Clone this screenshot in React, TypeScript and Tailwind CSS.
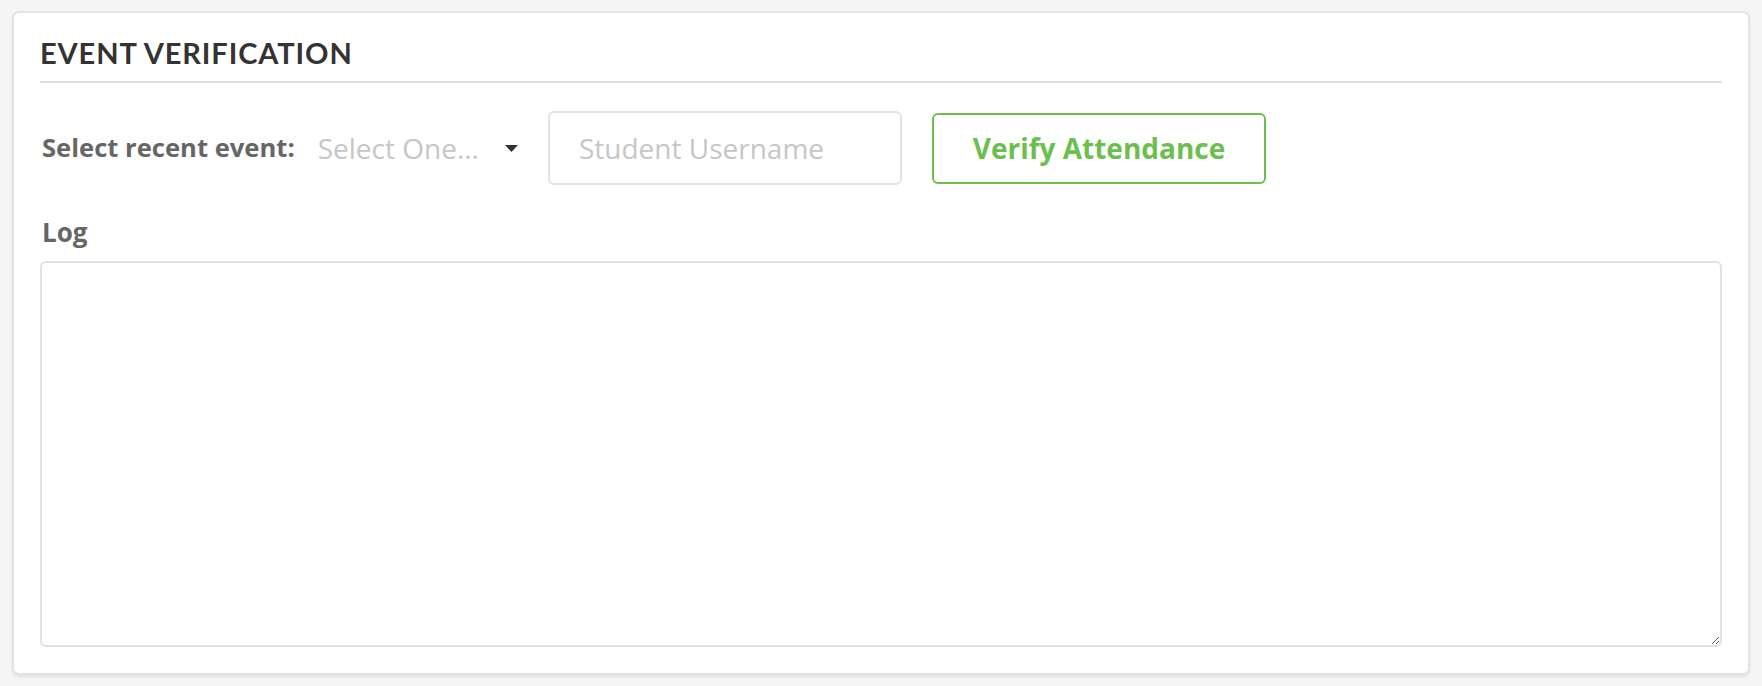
import React from "react";

export default function App() {
  return (
    <div
      className="min-h-[686px] w-full bg-[#f5f5f5] px-[12px] pt-[11px] pb-[11px]"
      style={{ fontFamily: '"Open Sans", "Noto Sans", sans-serif' }}
    >
      <div className="rounded-[7px] border-2 border-[#e3e3e3] bg-white px-[26px] pt-[23px] pb-[26px] shadow-[0_2px_3px_rgba(0,0,0,0.08)]">
        <div className="border-b-2 border-[#e0e0e0] pb-[11px]">
          <h2
            className="text-[29px] leading-[34px] font-bold tracking-[0.9px] text-[#333333]"
            style={{ fontFamily: 'Lato, "Noto Sans", sans-serif' }}
          >
            EVENT VERIFICATION
          </h2>
        </div>

        <div className="mt-[28px] flex h-[74px] items-center">
          <span className="ml-[2px] text-[25.6px] leading-[34px] font-bold text-[#666666]">
            Select recent event:
          </span>
          <div className="ml-[23px] flex items-center">
            <span className="text-[28px] leading-[36px] text-[#c6c6c6]">Select One...</span>
            <svg className="ml-[26px]" width="13" height="7" viewBox="0 0 13 7">
              <path d="M0 0 H13 L6.5 7 Z" fill="#333333" />
            </svg>
          </div>
          <input
            type="text"
            placeholder="Student Username"
            className="ml-[30px] h-[74px] w-[354px] rounded-[6px] border-2 border-[#e2e2e2] bg-white px-[29px] text-[28px] text-[#333] outline-none placeholder:text-[#c6c6c6]"
          />
          <button className="ml-[30px] h-[71px] w-[334px] rounded-[6px] border-2 border-[#6cbf4e] bg-white text-[28px] font-bold text-[#6cbf4e]">
            Verify Attendance
          </button>
        </div>

        <div className="mt-[29px] mb-[11px] ml-[2px] text-[26px] leading-[36px] font-bold text-[#666666]">
          Log
        </div>
        <textarea className="block h-[386px] w-full resize rounded-[6px] border-2 border-[#e2e2e2] bg-white p-3 text-[20px] outline-none" />
      </div>
    </div>
  );
}
